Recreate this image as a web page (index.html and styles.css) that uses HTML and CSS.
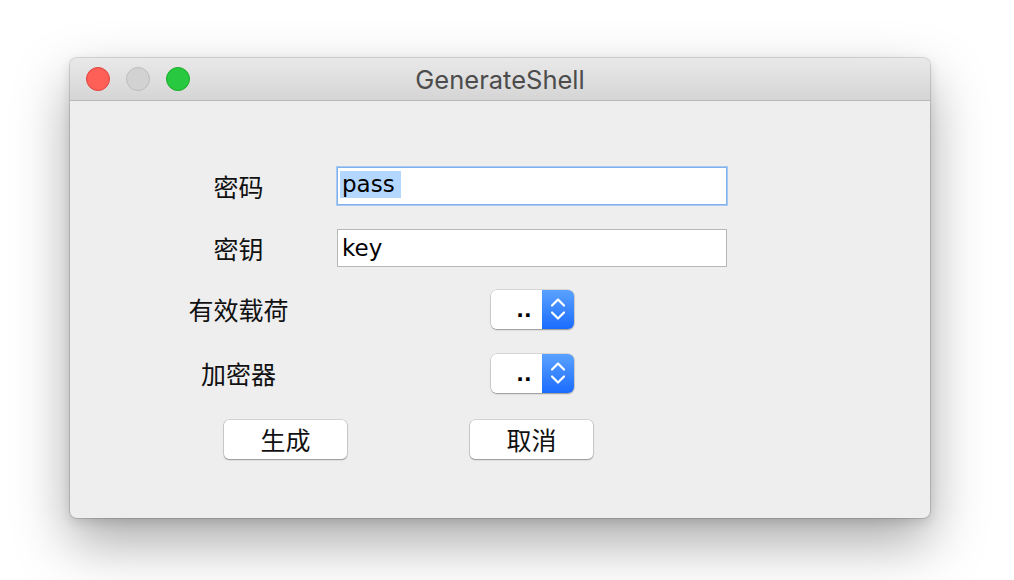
FILE: index.html
```html
<!DOCTYPE html>
<html>
<head>
<meta charset="utf-8">
<link rel="stylesheet" href="styles.css">
</head>
<body>
<div class="stage">
  <div class="window">
    <div class="titlebar">
      <div class="lights">
        <span class="light red"></span>
        <span class="light gray"></span>
        <span class="light green"></span>
      </div>
      <div class="title">GenerateShell</div>
    </div>
    <div class="content">
      <div class="row r1">
        <div class="label">密码</div>
        <div class="field"><div class="input focused"><span class="sel">pass</span></div></div>
      </div>
      <div class="row r2">
        <div class="label">密钥</div>
        <div class="field"><div class="input">key</div></div>
      </div>
      <div class="row r3">
        <div class="label">有效载荷</div>
        <div class="field center"><div class="combo"><div class="combo-val">..</div><div class="combo-btn"><svg width="16" height="24" viewBox="0 0 16 24"><path d="M2 8.5 L8 2.5 L14 8.5 M2 15.5 L8 21.5 L14 15.5" fill="none" stroke="#fff" stroke-width="2.2" stroke-linecap="round" stroke-linejoin="round"/></svg></div></div></div>
      </div>
      <div class="row r4">
        <div class="label">加密器</div>
        <div class="field center"><div class="combo"><div class="combo-val">..</div><div class="combo-btn"><svg width="16" height="24" viewBox="0 0 16 24"><path d="M2 8.5 L8 2.5 L14 8.5 M2 15.5 L8 21.5 L14 15.5" fill="none" stroke="#fff" stroke-width="2.2" stroke-linecap="round" stroke-linejoin="round"/></svg></div></div></div>
      </div>
      <div class="buttons">
        <button class="btn b1">生成</button>
        <button class="btn b2">取消</button>
      </div>
    </div>
  </div>
</div>
</body>
</html>
```

FILE: styles.css
```css
html, body {
  margin: 0;
  padding: 0;
  background: #ffffff;
}
.stage {
  width: 1014px;
  height: 580px;
  padding: 58px 0 0 70px;
  box-sizing: border-box;
  overflow: hidden;
}
.window {
  width: 860px;
  height: 460px;
  border-radius: 7px;
  background: #eeeeee;
  box-shadow: 0 0 0 1px rgba(0,0,0,0.13), 0 24px 55px rgba(0,0,0,0.34), 0 4px 12px rgba(0,0,0,0.12);
  overflow: hidden;
  display: flex;
  flex-direction: column;
}
.titlebar {
  height: 42px;
  flex: none;
  border-bottom: 1px solid #b9b9b9;
  background: linear-gradient(#e9e9e9, #d5d5d5);
  display: flex;
  align-items: center;
  position: relative;
}
.lights {
  display: flex;
  gap: 16px;
  padding-left: 16px;
}
.light {
  width: 24px;
  height: 24px;
  border-radius: 50%;
  box-sizing: border-box;
}
.red { background: #fe5f57; border: 1px solid #e0443e; }
.gray { background: #d2d2d2; border: 1px solid #bdbdbd; }
.green { background: #28c840; border: 1px solid #1aab29; }
.title {
  position: absolute;
  left: 0;
  right: 0;
  top: 0;
  bottom: 0;
  display: flex;
  align-items: center;
  justify-content: center;
  font-family: "Inter", "Liberation Sans", sans-serif;
  font-size: 25.5px;
  color: #4c4c4c;
  pointer-events: none;
}
.content {
  flex: 1;
  padding-top: 66px;
}
.row {
  display: flex;
  align-items: center;
}
.r1, .r2 { height: 38px; }
.r2 { margin-top: 24px; }
.r3 { height: 40px; margin-top: 22px; }
.r4 { height: 40px; margin-top: 24px; }
.label {
  width: 197px;
  margin-left: 70px;
  text-align: center;
  font-family: "Noto Sans CJK SC", sans-serif;
  font-size: 25px;
  color: #111;
}
.field {
  width: 390px;
  display: flex;
}
.center { justify-content: center; }
.input {
  width: 390px;
  height: 38px;
  box-sizing: border-box;
  background: #fff;
  border: 1px solid #b7b7b7;
  padding: 0 4px;
  font-family: "DejaVu Sans", sans-serif;
  font-size: 23px;
  line-height: 36px;
  color: #000;
}
.input.focused {
  border: 1px solid #7fb0f0;
  box-shadow: 0 0 0 1px #a9c9f3;
  padding: 0 2px;
}
.sel {
  background: #b3d7ff;
  display: inline-block;
  line-height: 27px;
  padding: 0 6px 0 2px;
  vertical-align: middle;
  margin-top: -6px;
}
.combo {
  width: 83px;
  height: 39px;
  display: flex;
  border-radius: 6px;
  overflow: hidden;
  box-shadow: 0 0 0 0.5px rgba(0,0,0,0.2), 0 1px 1.5px rgba(0,0,0,0.3);
}
.combo-val {
  flex: 1;
  background: #fff;
  text-align: right;
  padding-right: 10px;
  font-family: "DejaVu Sans", sans-serif;
  font-weight: bold;
  font-size: 20px;
  line-height: 41px;
  color: #000;
}
.combo-btn {
  width: 32px;
  background: linear-gradient(#5aa2ff, #1a6cfe);
  display: flex;
  align-items: center;
  justify-content: center;
}
.buttons {
  display: flex;
  margin-top: 27px;
}
.btn {
  width: 123px;
  height: 39px;
  background: #fff;
  border: none;
  border-radius: 5px;
  box-shadow: 0 0 0 0.5px rgba(0,0,0,0.22), 0 1px 1.5px rgba(0,0,0,0.3);
  font-family: "Noto Sans CJK SC", sans-serif;
  font-size: 25px;
  color: #111;
  padding: 0;
  line-height: 39px;
}
.b1 { margin-left: 154px; }
.b2 { margin-left: 123px; }
```
